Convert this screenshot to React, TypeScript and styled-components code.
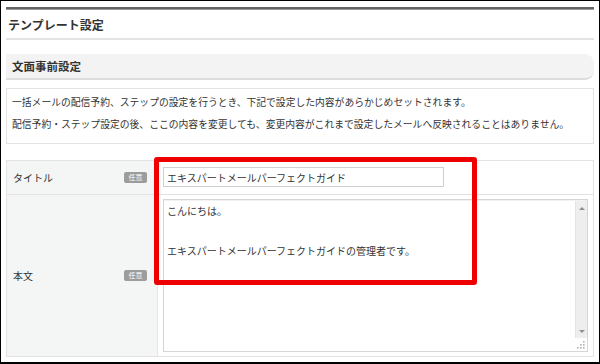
import React from "react";
import styled, { createGlobalStyle } from "styled-components";

const Global = createGlobalStyle`
  html, body { margin: 0; padding: 0; background: #fff; }
  body { font-family: "Noto Sans CJK JP", "Noto Sans", sans-serif; color: #333; }
  * { box-sizing: border-box; }
`;

const Frame = styled.div`
  width: 600px;
  height: 364px;
  border: 1px solid #000;
  border-bottom-width: 2px;
  padding: 6px 5px 0 5px;
  background: #fff;
  overflow: hidden;
`;

const TopBar = styled.div`
  height: 3px;
  background: #646464;
  border-bottom: 1px solid #9a9a9a;
`;

const PageTitle = styled.h2`
  margin: 0;
  height: 30px;
  padding: 2px 0 0 2px;
  font-size: 12px;
  font-weight: bold;
  line-height: 26px;
  color: #333;
  border-bottom: 2px solid #e4e4e4;
`;

const SectionHeader = styled.h3`
  margin: 14px 0 0;
  height: 26px;
  padding: 0 0 0 6px;
  font-size: 11.5px;
  font-weight: bold;
  line-height: 25px;
  color: #333;
  background: #f3f3f3;
  border-bottom: 2px solid #dcdcdc;
  border-radius: 0 9px 9px 0;
`;

const Description = styled.div`
  margin-top: 8px;
  border: 1px solid #e3e3e3;
  padding: 2px 5px 8px;
  font-size: 9.8px;
  line-height: 22px;
  color: #333;
`;

const Para = styled.p`
  margin: 0;
  white-space: nowrap;
`;

const FormTable = styled.div`
  position: relative;
  margin-top: 16px;
  border: 1px solid #e3e3e3;
  display: grid;
  grid-template-columns: 151px 1fr;
`;

const LabelCell = styled.div<{ $last?: boolean }>`
  background: #f4f5f5;
  border-right: 1px solid #e6e6e6;
  border-bottom: ${(p) => (p.$last ? "none" : "1px solid #e3e3e3")};
  display: flex;
  align-items: center;
  justify-content: space-between;
  padding: 0 10px 0 6px;
  font-size: 10px;
  color: #333;
`;

const ValueCell = styled.div<{ $last?: boolean; $h: number }>`
  height: ${(p) => p.$h}px;
  border-bottom: ${(p) => (p.$last ? "none" : "1px solid #e3e3e3")};
  padding: ${(p) => (p.$last ? "4px 5px 4px 5px" : "6px 5px 0 5px")};
  display: flex;
  flex-direction: column;
`;

const Badge = styled.span`
  display: inline-flex;
  align-items: center;
  justify-content: center;
  width: 23px;
  height: 11px;
  border-radius: 2px;
  background: #9c9c9c;
  color: #fff;
  font-size: 7px;
  line-height: 1;
`;

const TextInput = styled.input`
  width: 281px;
  height: 20px;
  border: 1px solid #cfcfcf;
  padding: 0 3px;
  font-family: inherit;
  font-size: 10px;
  color: #333;
  outline: none;
`;

const TextBox = styled.div`
  flex: 1;
  display: flex;
  border: 1px solid #d6d6d6;
  box-shadow: inset 0 1px 1px rgba(0, 0, 0, 0.06);
  background: #fff;
`;

const TextArea = styled.textarea`
  flex: 1;
  min-width: 0;
  resize: none;
  border: none;
  background: transparent;
  padding: 1px 3px;
  font-family: inherit;
  font-size: 10px;
  line-height: 20px;
  color: #333;
  overflow: hidden;
  outline: none;
`;

const ScrollColumn = styled.div`
  width: 12px;
  display: flex;
  flex-direction: column;
  margin-top: 1px;
`;

const ScrollTrack = styled.div`
  flex: 1;
  background: #eeeeee;
  border-left: 1px solid #e4e4e4;
  display: flex;
  flex-direction: column;
  justify-content: space-between;
  align-items: center;
  padding: 6px 0 5px;
`;

const Arrow = styled.span<{ $down?: boolean }>`
  width: 0;
  height: 0;
  border-left: 3px solid transparent;
  border-right: 3px solid transparent;
  ${(p) => (p.$down ? "border-top: 3px solid #8f8f8f;" : "border-bottom: 3px solid #8f8f8f;")}
`;

const GripCorner = styled.div`
  height: 13px;
  display: flex;
  align-items: flex-end;
  justify-content: flex-end;
  padding: 0 2px 2px 0;
`;

function Grip() {
  const dots = [
    [6, 0],
    [3, 3],
    [6, 3],
    [0, 6],
    [3, 6],
    [6, 6],
  ];
  return (
    <svg width="8" height="8" viewBox="0 0 8 8">
      {dots.map(([x, y], i) => (
        <rect key={i} x={x} y={y} width="1.6" height="1.6" fill="#b0b0b0" />
      ))}
    </svg>
  );
}

const Highlight = styled.div`
  position: absolute;
  left: 147px;
  top: -4px;
  width: 323px;
  height: 128px;
  border: 5px solid #ee0000;
  border-radius: 3px;
  pointer-events: none;
`;

export default function App() {
  return (
    <>
      <Global />
      <Frame>
        <TopBar />
        <PageTitle>テンプレート設定</PageTitle>
        <SectionHeader>文面事前設定</SectionHeader>
        <Description>
          <Para>一括メールの配信予約、ステップの設定を行うとき、下記で設定した内容があらかじめセットされます。</Para>
          <Para>配信予約・ステップ設定の後、ここの内容を変更しても、変更内容がこれまで設定したメールへ反映されることはありません。</Para>
        </Description>
        <FormTable>
          <LabelCell>
            <span>タイトル</span>
            <Badge>任意</Badge>
          </LabelCell>
          <ValueCell $h={34}>
            <TextInput defaultValue="エキスパートメールパーフェクトガイド" />
          </ValueCell>
          <LabelCell $last>
            <span>本文</span>
            <Badge>任意</Badge>
          </LabelCell>
          <ValueCell $last $h={161}>
            <TextBox>
              <TextArea defaultValue={"こんにちは。\n\nエキスパートメールパーフェクトガイドの管理者です。"} />
              <ScrollColumn>
                <ScrollTrack>
                  <Arrow />
                  <Arrow $down />
                </ScrollTrack>
                <GripCorner>
                  <Grip />
                </GripCorner>
              </ScrollColumn>
            </TextBox>
          </ValueCell>
          <Highlight />
        </FormTable>
      </Frame>
    </>
  );
}
